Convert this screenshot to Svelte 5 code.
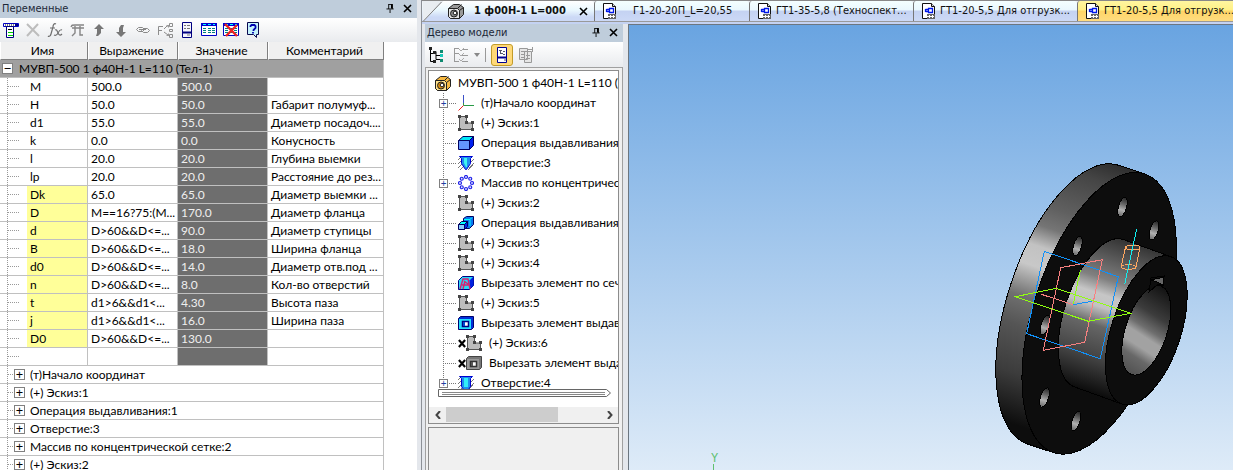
<script lang="ts">
	const variables = [
		{ name: "M", expr: "500.0", value: "500.0", note: "" },
		{ name: "H", expr: "50.0", value: "50.0", note: "Габарит полумуф..." },
		{ name: "d1", expr: "55.0", value: "55.0", note: "Диаметр посадоч...." },
		{ name: "k", expr: "0.0", value: "0.0", note: "Конусность" },
		{ name: "l", expr: "20.0", value: "20.0", note: "Глубина выемки" },
		{ name: "lp", expr: "20.0", value: "20.0", note: "Расстояние до рез..." },
		{ name: "Dk", expr: "65.0", value: "65.0", note: "Диаметр выемки ...", info: true },
		{ name: "D", expr: "M==16?75:(M...", value: "170.0", note: "Диаметр фланца", info: true },
		{ name: "d", expr: "D>60&&D<=...", value: "90.0", note: "Диаметр ступицы", info: true },
		{ name: "B", expr: "D>60&&D<=...", value: "18.0", note: "Ширина фланца", info: true },
		{ name: "d0", expr: "D>60&&D<=...", value: "14.0", note: "Диаметр отв.под ...", info: true },
		{ name: "n", expr: "D>60&&D<=...", value: "8.0", note: "Кол-во отверстий", info: true },
		{ name: "t", expr: "d1>6&&d1<...", value: "4.30", note: "Высота паза", info: true },
		{ name: "j", expr: "d1>6&&d1<...", value: "16.0", note: "Ширина паза", info: true },
		{ name: "D0", expr: "D>60&&D<=...", value: "130.0", note: "", info: true },
		{ name: "", expr: "", value: "", note: "" },
	];

	const groups = [
		"(т)Начало координат",
		"(+) Эскиз:1",
		"Операция выдавливания:1",
		"Отверстие:3",
		"Массив по концентрической сетке:2",
		"(+) Эскиз:2",
	];

	const tree = [
		{ icon: "origin", text: "(т)Начало координат", expand: true },
		{ icon: "sketch", text: "(+) Эскиз:1" },
		{ icon: "extrude", text: "Операция выдавливания:1" },
		{ icon: "hole", text: "Отверстие:3" },
		{ icon: "array", text: "Массив по концентрической сетке:2", expand: true },
		{ icon: "sketch", text: "(+) Эскиз:2" },
		{ icon: "boss", text: "Операция выдавливания:2" },
		{ icon: "sketch", text: "(+) Эскиз:3" },
		{ icon: "sketch", text: "(+) Эскиз:4" },
		{ icon: "loft", text: "Вырезать элемент по сечениям:1" },
		{ icon: "sketch", text: "(+) Эскиз:5" },
		{ icon: "cut", text: "Вырезать элемент выдавливания:1" },
		{ icon: "sketch", text: "(+) Эскиз:6", off: true },
		{ icon: "cutoff", text: "Вырезать элемент выдавливания:2", off: true },
		{ icon: "bore", text: "Отверстие:4", expand: true },
	];

	const tabs = [
		{ text: "Г1-20-20П_L=20,55", size: "short" },
		{ text: "ГТ1-35-5,8 (Техноспект...", size: "" },
		{ text: "ГТ1-20-5,5 Для отгрузк...", size: "" },
		{ text: "ГТ1-20-5,5 Для отгрузк...", size: "", marked: true },
	];

	const tools = [
		{ icon: "add", label: "Добавить переменную" },
		{ icon: "delete", label: "Удалить" },
		{ icon: "fx", label: "Функция" },
		{ icon: "pi", label: "Константа" },
		{ icon: "up", label: "Вверх" },
		{ icon: "down", label: "Вниз" },
		{ icon: "link", label: "Ссылка" },
		{ icon: "fsplit", label: "Разорвать ссылку" },
		{ icon: "panel", label: "Панель" },
		{ icon: "grid", label: "Таблица переменных" },
		{ icon: "griddel", label: "Удалить таблицу" },
		{ icon: "help", label: "Справка" },
	];

	const boltHoles = [
		[1122.5, 207],
		[1154, 230.5],
		[1077.5, 246],
		[1045, 325],
		[1044.5, 397.5],
		[1076, 421],
	];
	const ring = [0, 45, 90, 135, 180, 225, 270, 315].map((a) => [
		8 + 6 * Math.cos((a * Math.PI) / 180),
		8 + 6 * Math.sin((a * Math.PI) / 180),
	]);
</script>

{#snippet icon(name: string)}
	<svg class="icon" viewBox="0 0 16 16" aria-hidden="true">
		{#if name === "add"}
			<path d="M0.5 1.5h15v3h-15z" fill="#fff" stroke="#0000c0" />
			<path d="M2 3h9" stroke="#000" stroke-dasharray="1 1" /><path d="M12 2h3v2h-3z" fill="#000080" />
			<path d="M3.5 4.5h7v11h-7z" fill="#fff" stroke="#000080" />
			<path d="M5 7.5h4" stroke="#000" /><path d="M5 10.5h5M5 13.5h5" stroke="#00d000" />
		{:else if name === "delete"}
			<path d="M2 2L14 14M13 2L2 14" stroke="#bdbdbd" stroke-width="2" fill="none" />
		{:else if name === "fx"}
			<path d="M9 2c-2-1-3 1-3 3L4 12c-.5 2-2 3-3 2M3 6h5M8 8c2-1 2 1 3 3s2 3 4 1M15 8c-2-1-3 1-4 3s-2 3-4 2" fill="none" stroke="#6d6d6d" stroke-width="1.2" />
		{:else if name === "pi"}
			<path d="M2 5c1-2 1-2 4-2h9M3 6h12M6 4v7l-3 3M11 4v9h3" fill="none" stroke="#858585" stroke-width="1.4" />
		{:else if name === "up"}
			<path d="M8 2l5 5h-3v4l-3 3H5l1-3V7H3z" fill="#777" />
		{:else if name === "down"}
			<path d="M8 15l-5-5h3V6l2-3h3l-1 3v4h3z" fill="#777" />
		{:else if name === "link"}
			<path d="M1.5 7.5l2-2h4l2 2-2 2h-4zM6.5 8.5l2-2h4l2 2-2 2h-4zM4 7.5h7" fill="none" stroke="#888" />
		{:else if name === "fsplit"}
			<path d="M1.5 13V4.5H6M2 8.5h3M7 7l3-3M7 10l4 3M12.5 1.5h3v3h-3zM12.5 7.5h3v2h-3zM12.5 12.5h3v3h-3z" fill="none" stroke="#8d8d8d" />
			<path d="M9 3h3v3zM9 14h3v-3z" fill="#999" />
		{:else if name === "panel"}
			<path d="M3.5 .5h9v15h-9z" fill="#f4f4fc" stroke="#000080" />
			<path d="M3 10.5h10" stroke="#000080" stroke-width="2" />
			<path d="M5 3.5h2M8 3.5h3M5 6.5h2M8 6.5h3M8 13h3" stroke="#777" />
		{:else if name === "grid" || name === "griddel"}
			<path d="M.5 1.5h15v12H.5z" fill="#fff" stroke="#0000c8" /><path d="M0 1h16v3H0z" fill="#0000d0" />
			<path d="M2 2.5h3M7 2.5h3M12 2.5h2" stroke="#0ff" />
			<path d="M2 6.5h3M2 8.5h3M2 10.5h3M7 6.5h3M7 8.5h3M7 10.5h3M11 6.5h3M11 8.5h3M11 10.5h3" stroke="#008080" />
			{#if name === "griddel"}<path d="M2 2L14 14M14 3L3 14" stroke="#e22" stroke-width="2.4" />{/if}
		{:else if name === "help"}
			<path d="M2.5.5h11v12h-2v3l-3-3h-6z" fill="#c5f2fb" stroke="#0a0a50" />
			<path d="M5.5 5V4l1-1h3l1 1v2l-2 2v1M8 10v1.5" fill="none" stroke="#0000b0" stroke-width="1.8" />
		{:else if name === "origin"}
			<path d="M5.5 0v10.5H16" fill="none" stroke="#299b46" /><path d="M5.5 0v8" stroke="#3c50c8" />
			<path d="M5.5 10.5l-5 5" stroke="#f02020" />
		{:else if name === "sketch"}
			<path d="M1.5 1.5h7V8h6v6.5h-13z" fill="#bdbdbd" stroke="#555" />
			<path d="M0 0h3v3H0zM7 0h3v3H7zM7 6h3v3H7zM13 6h3v3h-3zM13 13h3v3h-3zM0 13h3v3H0z" fill="#444" />
		{:else if name === "extrude"}
			<path d="M.5 5.5h11v9H.5z" fill="#6496ff" stroke="#000060" />
			<path d="M.5 5.5L5 1.5h10.5l-4 4z" fill="#00e8f8" stroke="#000060" />
			<path d="M11.5 5.5l4-4v9l-4 4z" fill="#0020f0" stroke="#000060" />
		{:else if name === "hole" || name === "bore"}
			<path d="M0 5l3-3M0 9l4-4M0 13l4-4M2 15l4-4M10 15l5-5M11 9l5-5M11 13l5-5" stroke="#777" />
			{#if name === "hole"}
				<path d="M1.5 1.5h13l-2 2v5l-4 6h-1l-4-6v-5z" fill="#1e90ee" stroke="#0000d0" />
				<path d="M6 3h3v9H8L6 8z" fill="#3ff5ee" />
			{:else}
				<path d="M1.5 1.5h13l-2 2v8l-2 3h-5l-2-3v-8z" fill="#1e90ee" stroke="#0000d0" />
				<path d="M6 3h4v9H6z" fill="#30eef8" />
			{/if}
		{:else if name === "array"}
			{#each ring as [x, y]}
				<circle cx={x} cy={y} r="1.5" fill="#dfe4ff" stroke="#2222e8" stroke-width="1.2" />
			{/each}
		{:else if name === "boss"}
			<path d="M5.5 3.5l3-2h7v8l-4 4h-6z" fill="#0878f0" stroke="#000060" />
			<path d="M6 4.5h6l2-2M12 4.5V11" stroke="#0ff" fill="none" />
			<path d="M.5 9.5h6v5h-6z" fill="#8cf" stroke="#000060" />
			<path d="M.5 9.5l3-3h6l-3 3z" fill="#0ff" stroke="#000060" /><path d="M6.5 9.5l3-3v5l-3 3z" fill="#02e" stroke="#000060" />
		{:else if name === "loft"}
			<path d="M.5 5.5l4-4h11v9l-4 4H.5z" fill="#28d8f8" stroke="#000080" />
			<path d="M11.5 5.5l4-4v9l-4 4z" fill="#0020e0" />
			<path d="M2 14L5 4h5l2 10M4 10h7M6 6l4 3M5 14l2-8" stroke="#d82070" stroke-width="1.4" fill="none" />
		{:else if name === "cut" || name === "cutoff"}
			<path d="M.5 3.5l2-2h13v11l-2 2H.5z" fill={name === "cut" ? "#0030d8" : "#777"} stroke={name === "cut" ? "#000070" : "#444"} />
			<path d="M1 4h12v10H1z" fill={name === "cut" ? "#20e0ff" : "#999"} />
			<path d="M4.5 6.5h6v5h-6z" fill="#fff" stroke={name === "cut" ? "#000080" : "#333"} stroke-width="1.5" />
			<path d="M5 7h2v4H5z" fill={name === "cut" ? "#0048d0" : "#555"} />
		{:else if name === "part" || name === "grey"}
			<path d="M.5 5.5l5-4h6l4 3v7l-4 4h-9l-2-2z" fill={name === "part" ? "#f6b840" : "#999"} stroke="#222" />
			<path d="M.5 5.5h9l2 2v8h-9l-2-2z" fill={name === "part" ? "#ffe08a" : "#e4e4e4"} stroke="#222" />
			<path d="M9.5 5.5l4-4M11.5 7.5l4-3" stroke="#222" />
			<circle cx="6" cy="10.5" r="3.5" fill={name === "part" ? "#d88c10" : "#888"} stroke="#222" />
			<circle cx="7" cy="10" r="1.8" fill="#fff" stroke="#222" />
		{:else if name === "drawing"}
			<path d="M1.5.5h9l3 3v12h-12z" fill="#fff" stroke="#111" /><path d="M10.5.5v3h3" fill="#ddd" stroke="#111" />
			<path d="M7.5 5.5h4v4h-4zM4.5 6.5H7M4.5 8.5H7M4.5 6v3" fill="none" stroke="#0018e8" stroke-width="1.3" />
			<path d="M6 11h8v5H6z" fill="#666" /><path d="M6 13.5h7M8.5 12v3M11.5 12v3" stroke="#fff" />
		{:else if name === "struct"}
			<path d="M2.5 2v12.5H6M2.5 6.5H6M6 4.5h2v8h4M8 8.5h4" fill="none" stroke="#000" />
			<path d="M1 0h3v3H1zM5 4h3v3H5zM5 13h3v3H5z" fill="#222" /><path d="M12 3h3v3h-3zM12 12h3v3h-3z" fill="#0e8a70" /><path d="M12 7h3v3h-3z" fill="#18c8b8" />
		{:else if name === "checks"}
			<path d="M1.5 1v13M1 1.5h5M1 6.5h5M1 14.5h5M9 2.5h6M9 8.5h6M9 14.5h6" fill="none" stroke="#999" />
			<path d="M6 2l2 2 3-3M6 7l2 2 3-3M6 12l2 2 3-3" fill="none" stroke="#aaa" />
		{:else if name === "treepanel"}
			<path d="M3.5.5h9v15h-9z" fill="#fff" stroke="#000090" /><path d="M3 10.5h10" stroke="#000090" stroke-width="2" />
			<path d="M5 3.5h3M6.5 3v4M7 6.5h2M9 4.5h2M9 7.5h2M10 13h2" stroke="#55556a" />
		{:else if name === "pages"}
			<path d="M1.5 1.5h8v11h-8zM6.5 4.5h7v11h-7z" fill="#e6e6e6" stroke="#999" />
			<path d="M3 4.5h4M3 7.5h4M3 10.5h3M8 8.5h4M8 11.5h4M10 2.5h4M14.5 0v5" stroke="#999" />
		{/if}
	</svg>
{/snippet}

{#snippet panelButtons()}
	<span class="panel-buttons">
		<button aria-label="Закрепить">
			<svg viewBox="0 0 9 10"><path d="M2.5.5h4v5M2.5 0v5.5M0 5.5h8M4 6v4" fill="none" stroke="#000" /><path d="M5 0h2v5H5z" /></svg>
		</button>
		<button aria-label="Закрыть">
			<svg viewBox="0 0 9 9"><path d="M1 1l7 7M8 1l-7 7" stroke="#000" stroke-width="1.6" /></svg>
		</button>
	</span>
{/snippet}

<div class="app">
	<section class="vars">
		<header class="panel-title">
			<h2>Переменные</h2>
			{@render panelButtons()}
		</header>
		<div class="toolbar">
			{#each tools as tool}
				<button aria-label={tool.label}>{@render icon(tool.icon)}</button>
			{/each}
		</div>
		<table>
			<colgroup>
				<col class="c-name" /><col class="c-expr" /><col class="c-value" /><col class="c-note" />
			</colgroup>
			<thead>
				<tr><th>Имя</th><th>Выражение</th><th>Значение</th><th>Комментарий</th></tr>
			</thead>
			<tbody>
				<tr class="root">
					<td colspan="4">
						<div class="root-cell"><button class="box" aria-label="Свернуть">−</button>МУВП-500 1 ф40Н-1 L=110 (Тел-1)</div>
					</td>
				</tr>
				{#each variables as row}
					<tr>
						<td class="name">
							<div class="name-cell">
								<span class="guide"></span>
								<span class={["label", row.info ? "info" : ""]}>{row.name}</span>
							</div>
						</td>
						<td>{row.expr}</td>
						<td class="value">{row.value}</td>
						<td>{row.note}</td>
					</tr>
				{/each}
				{#each groups as group}
					<tr>
						<td colspan="4" class="name">
							<div class="name-cell">
								<span class="guide short"></span>
								<button class="box" aria-label="Развернуть">+</button>
								<span class="group">{group}</span>
							</div>
						</td>
					</tr>
				{/each}
			</tbody>
		</table>
	</section>

	<main>
		<nav class="tabs">
			<div class="tab active">
				<svg class="slant" viewBox="0 0 22 21" aria-hidden="true">
					<path d="M0 0h22L2 20.5H0z" fill="#e9edf1" /><path d="M1 21L20 1" stroke="#777" />
				</svg>
				{@render icon("grey")}
				<a href="#model">1 ф00Н-1 L=000</a>
				<button class="close" aria-label="Закрыть">
					<svg viewBox="0 0 9 9"><path d="M1 1l7 7M8 1l-7 7" stroke="#000" stroke-width="1.6" /></svg>
				</button>
			</div>
			{#each tabs as tab}
				<div class={["tab", tab.size, tab.marked ? "marked" : ""]}>
					{@render icon("drawing")}
					<a href="#drawing">{tab.text}</a>
				</div>
			{/each}
		</nav>

		<div class="work">
			<section class="model">
				<header class="panel-title">
					<h2>Дерево модели</h2>
					{@render panelButtons()}
				</header>
				<div class="toolbar tree-tools">
					<button aria-label="Структура">{@render icon("struct")}</button>
					<button class="content" aria-label="Состав">{@render icon("checks")}</button>
					<svg class="caret" viewBox="0 0 6 4" aria-hidden="true"><path d="M0 0h6L3 4z" fill="#888" /></svg>
					<span class="sep"></span>
					<button class="pressed" aria-label="Дерево">{@render icon("treepanel")}</button>
					<button aria-label="Отчёт">{@render icon("pages")}</button>
				</div>
				<div class="frame">
					<div class="tree-box">
						<div class="tree-root">{@render icon("part")}<span>МУВП-500 1 ф40Н-1 L=110 (Тел-1)</span></div>
						<ul>
							{#each tree as item}
								<li>
									<span class="branch">
										{#if item.expand}<button class="box small" aria-label="Развернуть">+</button>{/if}
									</span>
									{#if item.off}
										<svg class="cross" viewBox="0 0 9 10" aria-hidden="true"><path d="M1 1l7 8M8 1L1 9" stroke="#000" stroke-width="2.4" /></svg>
									{/if}
									{@render icon(item.icon)}
									<span class="text">{item.text}</span>
								</li>
							{/each}
						</ul>
						<svg class="stopper" viewBox="0 0 173 8" aria-hidden="true">
							<path d="M.5.5h168l4 3.5-4 3.5H.5z" fill="#fff" stroke="#666" /><path d="M4 3.5h163M4 5.5h163" stroke="#888" />
						</svg>
						<div class="scroll">
							<button aria-label="Влево"><svg viewBox="0 0 6 8"><path d="M5 0L1.5 4 5 8" fill="none" stroke="#444" stroke-width="2" /></svg></button>
							<span class="track"><span class="thumb"></span></span>
							<button aria-label="Вправо"><svg viewBox="0 0 6 8"><path d="M1 0l3.5 4L1 8" fill="none" stroke="#444" stroke-width="2" /></svg></button>
						</div>
					</div>
					<div class="empty-box"></div>
				</div>
			</section>

			<div class="viewport">
				<svg viewBox="629 25 604 445" preserveAspectRatio="xMaxYMid slice" aria-label="Модель фланца">
					<defs>
						<linearGradient id="rim" gradientUnits="userSpaceOnUse" x1="1140" y1="170" x2="1048" y2="445">
							<stop offset="0" stop-color="#2c2c2c" />
							<stop offset=".08" stop-color="#454545" />
							<stop offset=".22" stop-color="#606060" />
							<stop offset=".29" stop-color="#757575" />
							<stop offset=".36" stop-color="#c2c2c2" />
							<stop offset=".43" stop-color="#c8c8c8" />
							<stop offset=".54" stop-color="#707070" />
							<stop offset=".64" stop-color="#555" />
							<stop offset=".8" stop-color="#3c3c3c" />
							<stop offset=".97" stop-color="#0d0d0d" />
						</linearGradient>
						<linearGradient id="hub" gradientUnits="userSpaceOnUse" x1="1123" y1="239" x2="1075" y2="387">
							<stop offset="0" stop-color="#333" />
							<stop offset=".15" stop-color="#5c5c5c" />
							<stop offset=".28" stop-color="#808080" />
							<stop offset=".38" stop-color="#c6c6c6" />
							<stop offset=".46" stop-color="#c2c2c2" />
							<stop offset=".58" stop-color="#666" />
							<stop offset=".78" stop-color="#444" />
							<stop offset="1" stop-color="#0d0d0d" />
						</linearGradient>
						<linearGradient id="bore" gradientUnits="userSpaceOnUse" x1="1160" y1="288" x2="1137" y2="376">
							<stop offset="0" stop-color="#141414" />
							<stop offset=".3" stop-color="#3c3c3c" />
							<stop offset=".47" stop-color="#6e6e6e" />
							<stop offset=".56" stop-color="#a2a2a2" />
							<stop offset=".68" stop-color="#a2a2a2" />
							<stop offset=".8" stop-color="#686868" />
							<stop offset="1" stop-color="#505050" />
						</linearGradient>
						<linearGradient id="bolt" x1="0" y1="0" x2="0" y2="1">
							<stop offset="0" stop-color="#222" />
							<stop offset=".35" stop-color="#666" />
							<stop offset=".65" stop-color="#b0b0b0" />
							<stop offset="1" stop-color="#666" />
						</linearGradient>
					</defs>
					<g stroke="#000" shape-rendering="crispEdges">
						<path d="M1118.7 165.3A65.5 146.6 18.1 0 0 1027.4 444L1053.4 452.6L1144.7 174z" fill="url(#rim)" />
						<ellipse cx="1099.2" cy="313.3" rx="65.5" ry="146.6" transform="rotate(18.1 1099.2 313.3)" fill="#0d0d0d" />
						{#each boltHoles as [x, y]}
							<ellipse cx={x} cy={y} rx="4" ry="10" transform="rotate(17 {x} {y})" fill="url(#bolt)" />
						{/each}
						<path d="M1123.4 239.5A34.7 77.6 18.1 0 0 1075 387.1L1122.1 404.1L1170.5 256.5z" fill="url(#hub)" />
						<ellipse cx="1146.3" cy="330.3" rx="34.7" ry="77.6" transform="rotate(18.1 1146.3 330.3)" fill="#0d0d0d" />
						<ellipse cx="1146.3" cy="330.3" rx="20.8" ry="46.6" transform="rotate(18.1 1146.3 330.3)" fill="url(#bore)" />
						<path d="M1149 292l2-14 13-2-1 10-5-2z" fill="#0d0d0d" />
						<path d="M1151 280l13-3-1 8-6-3z" fill="#666" />
					</g>
					<g fill="none" shape-rendering="crispEdges">
						<path d="M1044.3 251.3L1118.3 276.7L1100.3 358.7L1026.7 333.7z" stroke="#1090f8" />
						<path d="M1060.7 267.7L1102.3 259.7L1084.7 342.3L1043.3 350.3z" stroke="#f88080" />
						<path d="M1015.3 296.7L1056 288.3L1130.7 313.3L1088.3 321.3z" stroke="#90ff10" />
						<path d="M1041.3 294.3L1073.3 304.7" stroke="#f88080" />
						<path d="M1080.3 270.3L1073.3 304.3" stroke="#90ff10" />
						<path d="M1073.3 304.7L1091.7 301.3" stroke="#1090f8" />
						<path d="M1125.7 246.5L1121.3 266M1139.7 248L1135.7 269" stroke="#ffa860" />
						<ellipse cx="1133" cy="247.5" rx="7" ry="2.3" stroke="#ffa860" />
						<ellipse cx="1128.5" cy="267" rx="7" ry="2.3" stroke="#ffa860" />
						<path d="M1136.7 229L1124.7 284" stroke="#10f0f0" />
					</g>
					<text x="711" y="462" class="axis">Y</text>
					<path d="M713.5 464v6" stroke="#60c070" />
				</svg>
			</div>
		</div>
	</main>
</div>

<style>
	:global(body) {
		margin: 0;
		background: #e4e7ec;
	}
	.app {
		display: flex;
		height: 100vh;
		overflow: hidden;
		font: 12px/18px Lato, "Noto Sans", sans-serif;
		color: #000;
	}
	button {
		padding: 0;
		border: 0;
		background: none;
		font: inherit;
		color: inherit;
		display: flex;
		align-items: center;
		justify-content: center;
	}
	.icon {
		display: block;
		width: 16px;
		height: 16px;
		flex: none;
	}

	/* docked panels */
	.panel-title {
		display: flex;
		justify-content: space-between;
		flex: none;
		height: 18px;
		background: #bfcddb;
	}
	h2 {
		margin: 0 2px;
		font: 400 11px/17px "DejaVu Sans Condensed", "DejaVu Sans", sans-serif;
		color: #1c2838;
	}
	.panel-buttons {
		display: flex;
		align-items: center;
		gap: 8px;
		padding: 0 5px 2px 0;
	}
	.panel-buttons svg,
	.close svg {
		display: block;
		width: 9px;
		height: 9px;
	}
	.toolbar {
		display: flex;
		align-items: center;
		gap: 6px;
		height: 24px;
		padding: 0 3px;
		background: linear-gradient(#fff, #e9ebee);
	}

	.vars {
		flex: none;
		width: 417px;
		background: #fff;
		overflow: hidden;
	}
	table {
		width: 384px;
		table-layout: fixed;
		border-collapse: separate;
		border-spacing: 0;
	}
	.c-name {
		width: 88px;
	}
	.c-expr,
	.c-value {
		width: 90px;
	}
	.c-note {
		width: 116px;
	}
	th,
	td {
		box-sizing: border-box;
		height: 18px;
		line-height: 17px;
		padding: 0 0 0 3px;
		border-right: 1px solid #c0c0c0;
		border-bottom: 1px solid #c0c0c0;
		overflow: hidden;
		white-space: nowrap;
		text-align: left;
	}
	th {
		padding: 0 3px 0 0;
		background: #f0f0f0;
		border-color: #808080;
		border-left: 1px solid #fff;
		font-weight: 400;
		text-align: center;
	}
	.root td {
		padding: 0;
		background: #a0a0a0;
	}
	.root-cell {
		display: flex;
		align-items: center;
		gap: 6px;
		padding-left: 2px;
	}
	.box {
		box-sizing: border-box;
		flex: none;
		width: 11px;
		height: 11px;
		border: 1px solid #808080;
		background: #fff;
		font-family: "Noto Sans", sans-serif;
		font-size: 13px;
		line-height: 9px;
	}
	td.value {
		background: #6e6e6e;
		color: #eee;
	}
	td.name {
		padding: 0;
	}
	.name-cell {
		display: flex;
		align-items: center;
		height: 17px;
	}
	.guide {
		flex: none;
		box-sizing: border-box;
		width: 13px;
		height: 17px;
		margin: 0 7px 0 7px;
		border-left: 1px dotted #999;
		background: repeating-linear-gradient(90deg, #999 0 1px, transparent 1px 2px) 0 8px / 100% 1px no-repeat;
	}
	.guide.short {
		width: 7px;
		margin-right: 0;
	}
	.label {
		flex: 1;
		height: 17px;
		padding-left: 3px;
	}
	.info {
		background: #ffff99;
	}
	.group {
		padding-left: 5px;
	}

	main {
		flex: 1;
		min-width: 0;
		display: flex;
		flex-direction: column;
		margin-left: 4px;
		border-left: 1px solid #8c9096;
	}

	/* document tabs */
	.tabs {
		display: flex;
		height: 22px;
		box-sizing: border-box;
		border-top: 1px solid #888;
		border-bottom: 1px solid #999;
		background: #e9edf1;
		font: 11px/20px "DejaVu Sans Condensed", "DejaVu Sans", sans-serif;
		overflow: hidden;
	}
	.tab {
		box-sizing: border-box;
		flex: none;
		display: flex;
		align-items: center;
		gap: 3px;
		width: 164px;
		padding-left: 7px;
		border-left: 1px solid #777;
		border-radius: 3px 3px 0 0;
		background: linear-gradient(#f4ffff 0, #eaf8fe 45%, #c4d2f2 50%, #ccd9f6);
		white-space: nowrap;
	}
	.tab.short {
		width: 155px;
		gap: 15px;
	}
	.tab.marked {
		background: linear-gradient(#fff6a0 0, #fff086 45%, #ffd566 50%, #ffdc80);
	}
	.tab.active {
		width: 172px;
		gap: 5px;
		padding: 0 0 0 3px;
		border: 0;
		font-weight: 700;
		background: linear-gradient(#fff, #eaf8fe 45%, #ccd9f6 80%);
	}
	.tab a {
		color: #111;
		text-decoration: none;
	}
	.active a {
		padding-left: 5px;
	}
	.slant {
		width: 22px;
		height: 20px;
		flex: none;
		margin: 0 -1px 0 -3px;
	}
	.close {
		margin: 0 6px 0 auto;
	}

	.work {
		flex: 1;
		min-height: 0;
		display: flex;
		background: #e4e7ec;
		border-top: 2px solid #c4d2f2;
	}
	.model {
		flex: none;
		width: 198px;
		display: flex;
		flex-direction: column;
		margin: 0 5px 0 3px;
	}
	.tree-tools {
		flex: none;
		gap: 5px;
		height: 25px;
	}
	.content {
		margin-left: 4px;
	}
	.caret {
		flex: none;
		width: 6px;
		height: 4px;
	}
	.sep {
		width: 1px;
		height: 14px;
		background: #999;
	}
	.pressed {
		width: 22px;
		height: 22px;
		border: 1px solid #c29b29;
		border-radius: 3px;
		background: #ffd978;
	}
	.frame {
		flex: 1;
		min-height: 0;
		display: flex;
		flex-direction: column;
		gap: 3px;
		padding: 2px 3px 0 2px;
		border: 1px solid #a0a0a0;
		border-bottom: 0;
		background: #f0f0f0;
	}
	.tree-box {
		flex: none;
		border: 1px solid #8c8c8c;
		background: #fff;
		overflow: hidden;
		line-height: 20px;
		white-space: nowrap;
	}
	.tree-root {
		display: flex;
		align-items: center;
		gap: 7px;
		height: 20px;
		margin-top: 2px;
		padding-left: 6px;
	}
	ul {
		margin: 0;
		padding: 0 0 0 10px;
		height: 296px;
		list-style: none;
		overflow: hidden;
	}
	li {
		display: flex;
		align-items: center;
		height: 20px;
	}
	.branch {
		flex: none;
		display: flex;
		align-items: center;
		width: 19px;
		height: 20px;
		background:
			repeating-linear-gradient(#777 0 1px, transparent 1px 2px) 4px 0 / 1px 100% no-repeat,
			repeating-linear-gradient(90deg, #777 0 1px, transparent 1px 2px) 4px 10px / 13px 1px no-repeat;
	}
	.box.small {
		width: 9px;
		height: 9px;
		color: #2040a0;
		font-size: 10px;
		line-height: 7px;
	}
	.text {
		padding-left: 7px;
	}
	.cross {
		flex: none;
		width: 8px;
		height: 9px;
	}
	.stopper {
		display: block;
		width: 173px;
		height: 8px;
		margin: 0 0 10px 9px;
	}
	.scroll {
		display: flex;
		height: 16px;
		background: #f0f0f0;
	}
	.scroll button {
		width: 17px;
	}
	.scroll svg {
		width: 6px;
		height: 8px;
	}
	.track {
		flex: 1;
	}
	.thumb {
		display: block;
		width: 72%;
		height: 15px;
		background: #cdcdcd;
	}
	.empty-box {
		flex: 1;
		border: 1px solid #8c8c8c;
		border-bottom: 0;
	}

	.viewport {
		flex: 1;
		min-width: 0;
		border: solid #6c7680;
		border-width: 1px 0 0 1px;
		background: linear-gradient(#69a4e1, #deebf8);
	}
	.viewport svg {
		display: block;
		width: 100%;
		height: 100%;
	}
	.axis {
		font: 12px "Liberation Mono", monospace;
		fill: #60c070;
	}
</style>
